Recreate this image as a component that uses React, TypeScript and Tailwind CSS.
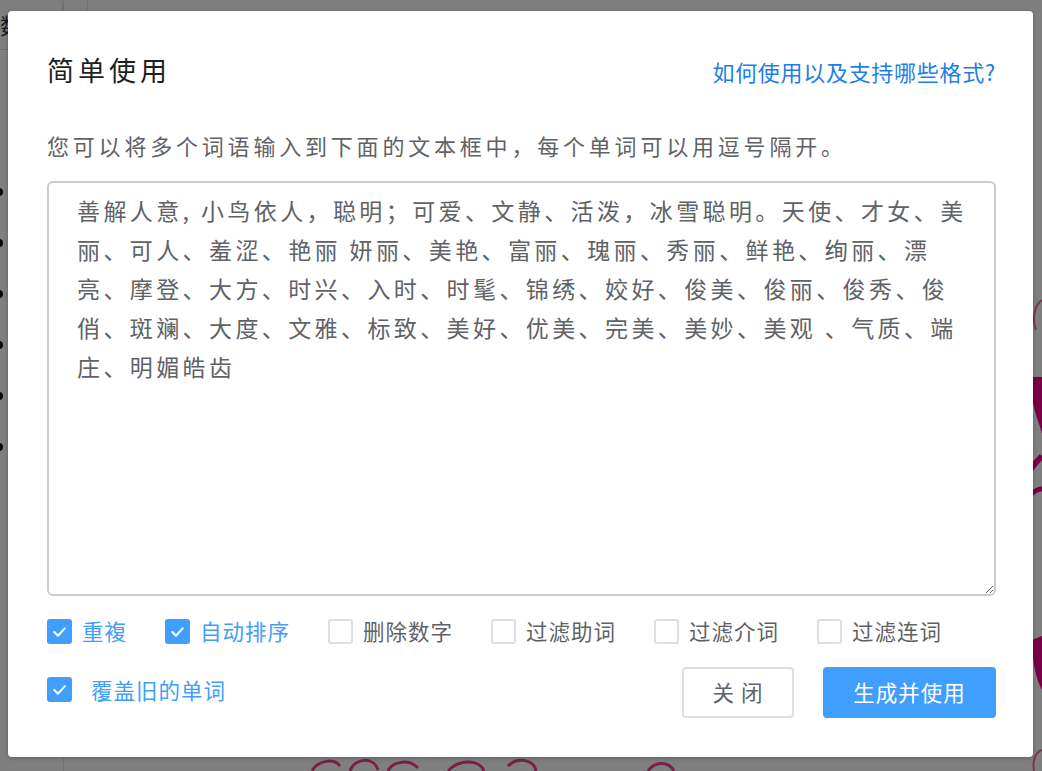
import React, { useState } from 'react';

type Option = { id: string; label: string; checked: boolean };

const initialOptions: Option[] = [
  { id: 'repeat', label: '重複', checked: true },
  { id: 'sort', label: '自动排序', checked: true },
  { id: 'digits', label: '删除数字', checked: false },
  { id: 'particles', label: '过滤助词', checked: false },
  { id: 'prepositions', label: '过滤介词', checked: false },
  { id: 'conjunctions', label: '过滤连词', checked: false },
];

const sampleWords =
  '善解人意, 小鸟依人，聪明；可爱、文静、活泼，冰雪聪明。天使、才女、美丽、可人、羞涩、艳丽 妍丽、美艳、富丽、瑰丽、秀丽、鲜艳、绚丽、漂亮、摩登、大方、时兴、入时、时髦、锦绣、姣好、俊美、俊丽、俊秀、俊俏、斑斓、大度、文雅、标致、美好、优美、完美、美妙、美观 、气质、端庄、明媚皓齿';

const CheckBox: React.FC<{ checked: boolean; onClick: () => void }> = ({ checked, onClick }) => (
  <span
    onClick={onClick}
    className={`w-[25px] h-[25px] shrink-0 rounded-[3px] flex items-center justify-center cursor-pointer ${
      checked ? 'bg-[#409eff]' : 'bg-white border-2 border-[#dcdfe6]'
    }`}
  >
    {checked && (
      <svg width="25" height="25" viewBox="0 0 24 24" fill="none">
        <polyline points="7,12.5 10.5,16 17,9" stroke="#fff" strokeWidth="2" strokeLinecap="round" strokeLinejoin="round" />
      </svg>
    )}
  </span>
);

const App: React.FC = () => {
  const [options, setOptions] = useState<Option[]>(initialOptions);
  const [overwrite, setOverwrite] = useState(true);
  const [words, setWords] = useState(sampleWords);

  const toggle = (id: string) =>
    setOptions((prev) => prev.map((o) => (o.id === id ? { ...o, checked: !o.checked } : o)));

  return (
    <div className="relative w-[1042px] h-[771px] overflow-hidden bg-white font-['Noto_Sans_CJK_SC',sans-serif]">
      {/* page behind the dialog */}
      <div className="flex h-full">
        <div className="w-[64px] shrink-0 border-r border-[#e4e7ed] flex flex-col">
          <div className="h-[50px] border-b border-r border-[#dcdfe6] rounded-tr-[6px] overflow-hidden flex items-center">
            <span className="text-[22px] text-[#333]">数</span>
          </div>
          <div className="flex flex-col gap-[43px] mt-[138px] -ml-[5px]">
            {[0, 1, 2, 3, 4, 5].map((i) => (
              <span key={i} className="w-[8px] h-[8px] rounded-full bg-[#111]" />
            ))}
          </div>
        </div>
        <div className="w-[24px] shrink-0 h-[14px] border-r border-[#e4e7ed]" />
        <div className="flex-1 relative">
          <svg className="absolute inset-0" width="954" height="771" viewBox="0 0 954 771" fill="none">
            <path d="M944 377 C 940 395, 950 420, 954 433 L 954 377 Z" fill="#f0008c" />
            <path d="M942 470 C 948 462, 952 458, 954 456" stroke="#f0008c" strokeWidth="6" />
            <path d="M943 494 C 948 490, 951 489, 954 489" stroke="#f0008c" strokeWidth="5" />
            <path d="M944 640 C 944 660, 948 680, 954 690 L 954 636 Z" fill="#f0008c" />
            <path d="M948 330 C 944 320, 946 305, 954 300" stroke="#f06aa8" strokeWidth="2" />
            <path d="M946 771 C 944 760, 948 752, 954 750" stroke="#f06aa8" strokeWidth="2" />
            <path d="M224 771 C 230 760, 246 758, 252 766 M262 771 C 266 758, 286 756, 290 770 M300 771 C 304 762, 320 758, 330 768 M360 771 C 372 758, 392 760, 396 771 M420 766 C 430 756, 446 760, 448 771 M560 771 C 566 762, 580 760, 586 771" stroke="#f0408e" strokeWidth="3" />
          </svg>
        </div>
      </div>

      {/* dialog overlay */}
      <div className="absolute inset-0 bg-black/50" />

      <div className="absolute left-[8px] top-[11px] w-[1025px] h-[746px] bg-white rounded-[4px] shadow-[0_1px_4px_rgba(0,0,0,0.25)] pl-[39px] pr-[37px] pt-[41px] flex flex-col">
        <div className="flex items-baseline justify-between">
          <h2 className="text-[27px] leading-[36px] tracking-[4px] text-[#1f1f1f]">简单使用</h2>
          <a className="text-[22px] leading-[36px] tracking-[0.7px] text-[#1b7fe6] cursor-pointer">如何使用以及支持哪些格式?</a>
        </div>

        <p className="mt-[41px] text-[22px] leading-[30px] tracking-[3.8px] text-[#606266]">
          您可以将多个词语输入到下面的文本框中，每个单词可以用逗号隔开。
        </p>

        <textarea
          value={words}
          onChange={(e) => setWords(e.target.value)}
          className="mt-[21px] h-[415px] w-full resize-y border-2 border-[#c8cbd2] rounded-[6px] pt-[8px] pl-[28px] pr-[20px] text-[23px] leading-[39px] tracking-[3.4px] text-[#606266] outline-none font-['Noto_Sans_CJK_SC',serif]"
        />

        <div className="mt-[20px] h-[30px] flex items-center gap-x-[38px]">
          {options.map((o) => (
            <label key={o.id} className="flex items-center gap-[10px] cursor-pointer">
              <CheckBox checked={o.checked} onClick={() => toggle(o.id)} />
              <span
                className={`text-[21.5px] leading-[30px] tracking-[1px] ${o.checked ? 'text-[#409eff]' : 'text-[#606266]'}`}
              >
                {o.label}
              </span>
            </label>
          ))}
        </div>

        <div className="mt-[21px] flex items-start justify-between">
          <label className="mt-[10px] flex items-center gap-[19px] cursor-pointer">
            <CheckBox checked={overwrite} onClick={() => setOverwrite(!overwrite)} />
            <span className="text-[21.5px] leading-[24px] tracking-[1px] text-[#409eff]">覆盖旧的单词</span>
          </label>
          <div className="flex gap-[29px]">
            <button className="w-[112px] h-[51px] border-2 border-[#dcdfe6] rounded-[4px] bg-white text-[21.5px] text-[#606266] tracking-[1px]">
              关 闭
            </button>
            <button className="w-[173px] h-[51px] rounded-[4px] bg-[#409eff] text-[21.5px] text-white tracking-[1px]">
              生成并使用
            </button>
          </div>
        </div>
      </div>
    </div>
  );
};

export default App;
